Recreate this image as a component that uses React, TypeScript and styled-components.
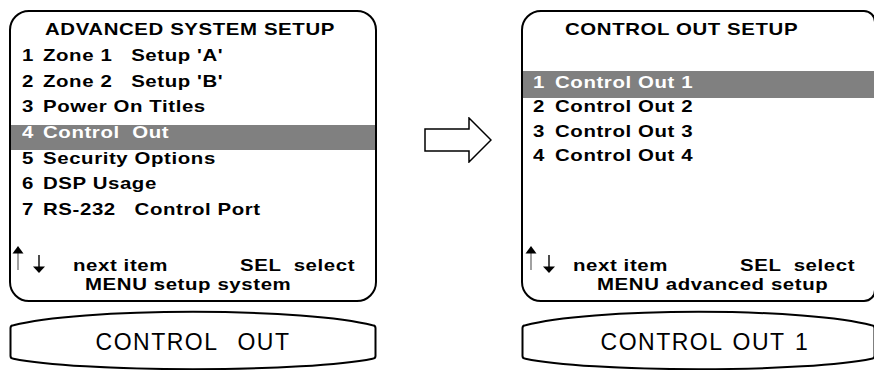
import styled, { createGlobalStyle } from "styled-components";

const GlobalStyle = createGlobalStyle`
  html, body {
    margin: 0;
    padding: 0;
    background: #fff;
    overflow: hidden;
  }
  body {
    font-family: "Liberation Sans", Arial, sans-serif;
    color: #000;
  }
`;

const Page = styled.div`
  display: flex;
  align-items: flex-start;
  width: 874px;
  height: 370px;
  padding: 10px 0 0 9px;
  box-sizing: border-box;
  overflow: hidden;
`;

const Column = styled.div<{ $width: number }>`
  flex: none;
  width: ${(p) => p.$width}px;
  display: flex;
  flex-direction: column;
`;

const Screen = styled.div<{ $radius: string }>`
  height: 292px;
  box-sizing: border-box;
  border: 2px solid #000;
  border-radius: ${(p) => p.$radius};
  display: flex;
  flex-direction: column;
  padding: 5.25px 0 6.4px;
  font-size: 17px;
  font-weight: 700;
  letter-spacing: 0.5px;
  white-space: pre;
  overflow: hidden;
`;

// the LCD font is a horizontally widened Arial Bold
const Wide = styled.span`
  display: inline-block;
  transform: scaleX(1.2);
  transform-origin: 0 50%;
`;

const Title = styled.div<{ $indent: number }>`
  padding-left: ${(p) => p.$indent}px;
  line-height: 25.7px;
  height: 25.7px;
`;

const Items = styled.div<{ $gap: number }>`
  margin-top: ${(p) => p.$gap}px;
`;

const Row = styled.div<{ $pitch: number; $pad: number; $active?: boolean; $bandTop: number; $bandExtra: number }>`
  height: ${(p) => p.$pitch}px;
  line-height: ${(p) => p.$pitch}px;
  padding-left: ${(p) => p.$pad}px;
  ${(p) =>
    p.$active &&
    `
    color: #fff;
    background: linear-gradient(to bottom, transparent ${p.$bandTop}px, #808080 ${p.$bandTop}px);
    padding-bottom: ${p.$bandExtra}px;
    margin-bottom: -${p.$bandExtra}px;
  `}
`;

const Num = styled.span<{ $width: number }>`
  display: inline-block;
  width: ${(p) => p.$width / 1.2}px;
`;

const Footer = styled.div`
  margin-top: auto;
  line-height: 19px;
`;

const HintRow = styled.div<{ $arrowCol: number }>`
  display: grid;
  grid-template-columns: ${(p) => p.$arrowCol}px 167px auto;
  height: 19px;
`;

const Arrows = styled.div<{ $gap: number; $pad: number }>`
  display: flex;
  align-items: flex-end;
  gap: ${(p) => p.$gap}px;
  height: 19px;
  padding-left: ${(p) => p.$pad}px;
`;

const UpIcon = styled.svg`
  flex: none;
  margin-bottom: 5px;
`;

const DownIcon = styled.svg`
  flex: none;
  margin-bottom: 2px;
`;

const MenuLine = styled.div`
  padding-left: 74px;
  height: 19px;
`;

const Bezel = styled.div<{ $shift: number }>`
  position: relative;
  height: 64px;
  margin-top: 8px;
  display: flex;
  align-items: center;
  justify-content: center;
  padding-left: ${(p) => p.$shift}px;
  font-size: 23px;
  font-weight: 400;
  letter-spacing: 1.5px;
  word-spacing: 2px;
  white-space: pre;

  svg {
    position: absolute;
    top: 0;
    left: 0;
  }
`;

const BezelText = styled.span`
  position: relative;
`;

const Middle = styled.div`
  flex: none;
  width: 144px;
  box-sizing: border-box;
  padding: 107px 0 0 47px;
`;

const UpArrow = () => (
  <UpIcon width="12" height="24" viewBox="0 0 12 24">
    <line x1="6" y1="6" x2="6" y2="24" stroke="#7a7a7a" strokeWidth="1.4" />
    <polygon points="0.5,7.5 6,0 11.5,7.5" fill="#000" />
  </UpIcon>
);

const DownArrow = () => (
  <DownIcon width="12" height="18" viewBox="0 0 12 18">
    <line x1="6" y1="0" x2="6" y2="12" stroke="#000" strokeWidth="1.4" />
    <polygon points="0,11.5 12,11.5 6,18" fill="#000" />
  </DownIcon>
);

// barrel shaped LCD window under each screen
const BezelShape = ({ width }: { width: number }) => {
  const h = 64;
  const l = 1.5;
  const r = width - 1.5;
  const half = (r - l - 6) / 2;
  const rx = half * 1.09;
  const k = 1 - Math.sqrt(1 - (half / rx) ** 2);
  const topRy = 13.5 / k;
  const botRy = 10.5 / k;
  const d = [
    `M${l},18`,
    `Q${l},15.5 ${l + 3},15.3`,
    `A${rx} ${topRy} 0 0 1 ${r - 3},15.3`,
    `Q${r},15.5 ${r},18`,
    `V46`,
    `Q${r},48.5 ${r - 3},48.7`,
    `A${rx} ${botRy} 0 0 1 ${l + 3},48.7`,
    `Q${l},48.5 ${l},46`,
    "Z",
  ].join(" ");
  return (
    <svg width={width} height={h} viewBox={`0 0 ${width} ${h}`}>
      <path d={d} fill="none" stroke="#000" strokeWidth="2" />
    </svg>
  );
};

type MenuProps = {
  width: number;
  radius: string;
  title: string;
  titleIndent: number;
  items: string[];
  active: number;
  gap: number;
  pitch: number;
  pad: number;
  numWidth: number;
  bandTop: number;
  bandExtra: number;
  arrowCol: number;
  arrowGap: number;
  arrowPad: number;
  menu: string;
  display: string;
  shift: number;
};

const Panel = (p: MenuProps) => (
  <Column $width={p.width}>
    <Screen $radius={p.radius}>
      <Title $indent={p.titleIndent}>
        <Wide>{p.title}</Wide>
      </Title>
      <Items $gap={p.gap}>
        {p.items.map((label, i) => (
          <Row
            key={label}
            $pitch={p.pitch}
            $pad={p.pad}
            $active={i === p.active}
            $bandTop={p.bandTop}
            $bandExtra={p.bandExtra}
          >
            <Wide>
              <Num $width={p.numWidth}>{i + 1}</Num>
              {label}
            </Wide>
          </Row>
        ))}
      </Items>
      <Footer>
        <HintRow $arrowCol={p.arrowCol}>
          <Arrows $gap={p.arrowGap} $pad={p.arrowPad}>
            <UpArrow />
            <DownArrow />
          </Arrows>
          <span>
            <Wide>next item</Wide>
          </span>
          <span>
            <Wide>SEL  select</Wide>
          </span>
        </HintRow>
        <MenuLine>
          <Wide>{p.menu}</Wide>
        </MenuLine>
      </Footer>
    </Screen>
    <Bezel $shift={p.shift}>
      <BezelShape width={p.width} />
      <BezelText>{p.display}</BezelText>
    </Bezel>
  </Column>
);

const App = () => {
  return (
    <Page>
      <GlobalStyle />
      <Panel
        width={368}
        radius="20px"
        title="ADVANCED SYSTEM SETUP"
        titleIndent={34}
        items={[
          "Zone 1   Setup 'A'",
          "Zone 2   Setup 'B'",
          "Power On Titles",
          "Control  Out",
          "Security Options",
          "DSP Usage",
          "RS-232   Control Port",
        ]}
        active={3}
        gap={0}
        pitch={25.7}
        pad={11}
        numWidth={21}
        bandTop={5}
        bandExtra={4.3}
        arrowCol={62}
        arrowGap={9}
        arrowPad={1}
        menu="MENU setup system"
        display="CONTROL  OUT"
        shift={0}
      />
      <Middle>
        <svg width="68" height="46" viewBox="0 0 68 46">
          <path d="M1,12 H45 V1 L67,23 L45,45 V34 H1 Z" fill="#fff" stroke="#000" strokeWidth="1.5" />
        </svg>
      </Middle>
      <Panel
        width={355}
        radius="20px 12px 12px 20px"
        title="CONTROL OUT SETUP"
        titleIndent={42}
        items={["Control Out 1", "Control Out 2", "Control Out 3", "Control Out 4"]}
        active={0}
        gap={28}
        pitch={24.4}
        pad={10}
        numWidth={22}
        bandTop={0}
        bandExtra={2.6}
        arrowCol={50}
        arrowGap={6}
        arrowPad={2}
        menu="MENU advanced setup"
        display="CONTROL OUT 1"
        shift={13}
      />
    </Page>
  );
};

export default App;
